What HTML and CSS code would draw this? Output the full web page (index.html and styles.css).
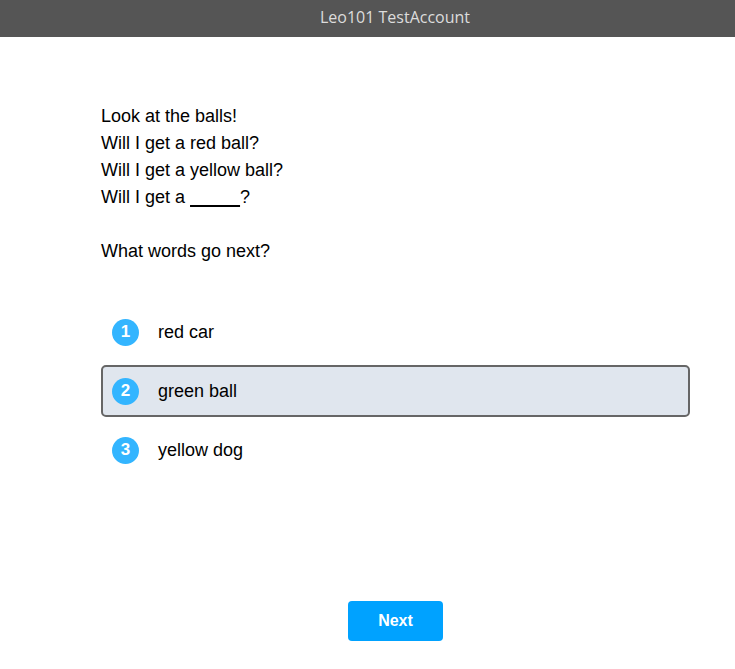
FILE: index.html
```html
<!DOCTYPE html>
<html lang="en">
<head>
<meta charset="utf-8"/>
<title>Question</title>
<link rel="stylesheet" href="styles.css">
</head>
<body>
<div class="topbar">Leo101 TestAccount</div>
<div class="main">
  <div class="prompt">
    <p>Look at the balls!</p>
    <p>Will I get a red ball?</p>
    <p>Will I get a yellow ball?</p>
    <p>Will I get a <u>&nbsp;&nbsp;&nbsp;&nbsp;&nbsp;&nbsp;&nbsp;&nbsp;&nbsp;&nbsp;</u>?</p>
    <p>&nbsp;</p>
    <p>What words go next?</p>
  </div>
  <ul class="choices">
    <li class="choice"><span class="num">1</span>red car</li>
    <li class="choice selected"><span class="num">2</span>green ball</li>
    <li class="choice"><span class="num">3</span>yellow dog</li>
  </ul>
  <div class="actions">
    <button class="next">Next</button>
  </div>
</div>
</body>
</html>
```

FILE: styles.css
```css
body {
    margin: 0;
    background: #fff;
    font-family: 'Liberation Sans', Arial, sans-serif;
    color: #000;
    overflow: hidden;
}
.topbar {
    height: 37px;
    line-height: 35px;
    background-color: #555555;
    color: #dcdcdc;
    font-family: 'Open Sans', 'Noto Sans', sans-serif;
    font-size: 16px;
    text-align: center;
    padding-left: 55px;
}
.main {
    margin-left: 101px;
    width: 589px;
    padding-top: 66px;
}
.prompt p {
    margin: 0;
    font-size: 18px;
    line-height: 27px;
}
.prompt u {
    text-decoration-thickness: 2px;
    text-underline-offset: 2px;
}
.choices {
    list-style: none;
    margin: 41px 0 0;
    padding: 0;
}
.choice {
    display: flex;
    align-items: center;
    height: 52px;
    box-sizing: border-box;
    padding-left: 9px;
    margin-bottom: 7px;
    font-size: 18px;
    border: 2px solid transparent;
    border-radius: 5px;
}
.choice.selected {
    background-color: #e0e6ee;
    border-color: #666;
}
.num {
    width: 27px;
    height: 27px;
    border-radius: 50%;
    background-color: #33b5ff;
    color: #fff;
    font-weight: bold;
    font-size: 17px;
    display: flex;
    align-items: center;
    justify-content: center;
    margin-right: 19px;
}
.actions {
    display: flex;
    justify-content: center;
    margin-top: 125px;
}
.next {
    width: 95px;
    height: 40px;
    border: none;
    border-radius: 4px;
    background-color: #00a2ff;
    color: #fff;
    font-family: 'Liberation Sans', Arial, sans-serif;
    font-weight: bold;
    font-size: 16px;
}
```
